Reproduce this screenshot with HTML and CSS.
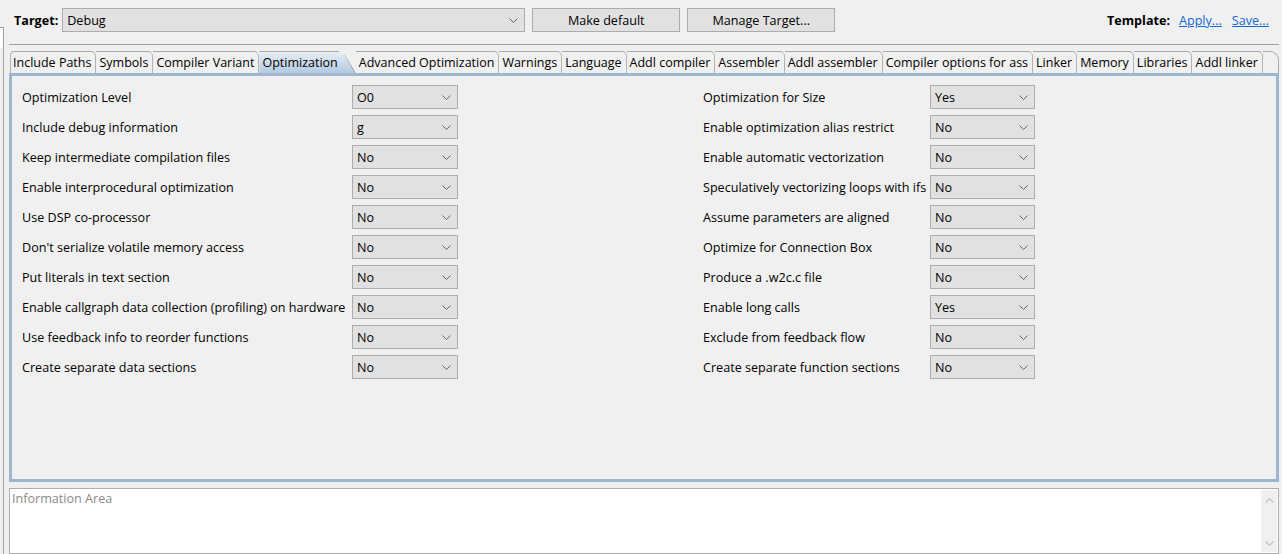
FILE: index.html
```html
<!DOCTYPE html>
<html>
<head>
<meta charset="utf-8">
<link rel="stylesheet" href="styles.css">
</head>
<body>
<div class="app">
  <div class="edge"><div class="edge-box"></div><div class="edge-line"></div></div>
  <div class="main">
    <header class="toolbar">
      <span class="strong target-lbl">Target:</span>
      <div class="combo combo-target"><span>Debug</span><svg class="chev" width="9" height="5" viewBox="0 0 9 5"><path d="M0.5 0.5 L4.5 4.5 L8.5 0.5" fill="none" stroke="#666" stroke-width="1"/></svg></div>
      <button class="btn">Make default</button>
      <button class="btn">Manage Target...</button>
      <div class="spacer"></div>
      <span class="strong">Template:</span>
      <a class="link link-apply">Apply...</a>
      <a class="link link-save">Save...</a>
    </header>
    <div class="rule"></div>
    <nav class="tabs">
      <div class="tab first">Include Paths</div>
      <div class="tab">Symbols</div>
      <div class="tab">Compiler Variant</div>
      <div class="tab active">Optimization<svg class="slant" width="18" height="22" viewBox="0 0 18 22"><path d="M0 0.5 C4 0.5 5 1 7 4 L17.5 22" fill="none" stroke="#8c8c8c" stroke-width="1"/></svg></div>
      <div class="tab">Advanced Optimization</div>
      <div class="tab">Warnings</div>
      <div class="tab">Language</div>
      <div class="tab">Addl compiler</div>
      <div class="tab">Assembler</div>
      <div class="tab">Addl assembler</div>
      <div class="tab">Compiler options for ass</div>
      <div class="tab">Linker</div>
      <div class="tab">Memory</div>
      <div class="tab">Libraries</div>
      <div class="tab">Addl linker</div>
      <div class="tab-fill"></div>
    </nav>
    <section class="panel">
      <div class="form">
        <div class="lbl">Optimization Level</div>
        <div class="combo"><span>O0</span><svg class="chev" width="9" height="5" viewBox="0 0 9 5"><path d="M0.5 0.5 L4.5 4.5 L8.5 0.5" fill="none" stroke="#666"/></svg></div>
        <div class="lbl lbl-r">Optimization for Size</div>
        <div class="combo"><span>Yes</span><svg class="chev" width="9" height="5" viewBox="0 0 9 5"><path d="M0.5 0.5 L4.5 4.5 L8.5 0.5" fill="none" stroke="#666"/></svg></div>

        <div class="lbl">Include debug information</div>
        <div class="combo"><span>g</span><svg class="chev" width="9" height="5" viewBox="0 0 9 5"><path d="M0.5 0.5 L4.5 4.5 L8.5 0.5" fill="none" stroke="#666"/></svg></div>
        <div class="lbl lbl-r">Enable optimization alias restrict</div>
        <div class="combo"><span>No</span><svg class="chev" width="9" height="5" viewBox="0 0 9 5"><path d="M0.5 0.5 L4.5 4.5 L8.5 0.5" fill="none" stroke="#666"/></svg></div>

        <div class="lbl">Keep intermediate compilation files</div>
        <div class="combo"><span>No</span><svg class="chev" width="9" height="5" viewBox="0 0 9 5"><path d="M0.5 0.5 L4.5 4.5 L8.5 0.5" fill="none" stroke="#666"/></svg></div>
        <div class="lbl lbl-r">Enable automatic vectorization</div>
        <div class="combo"><span>No</span><svg class="chev" width="9" height="5" viewBox="0 0 9 5"><path d="M0.5 0.5 L4.5 4.5 L8.5 0.5" fill="none" stroke="#666"/></svg></div>

        <div class="lbl">Enable interprocedural optimization</div>
        <div class="combo"><span>No</span><svg class="chev" width="9" height="5" viewBox="0 0 9 5"><path d="M0.5 0.5 L4.5 4.5 L8.5 0.5" fill="none" stroke="#666"/></svg></div>
        <div class="lbl lbl-r">Speculatively vectorizing loops with ifs</div>
        <div class="combo"><span>No</span><svg class="chev" width="9" height="5" viewBox="0 0 9 5"><path d="M0.5 0.5 L4.5 4.5 L8.5 0.5" fill="none" stroke="#666"/></svg></div>

        <div class="lbl">Use DSP co-processor</div>
        <div class="combo"><span>No</span><svg class="chev" width="9" height="5" viewBox="0 0 9 5"><path d="M0.5 0.5 L4.5 4.5 L8.5 0.5" fill="none" stroke="#666"/></svg></div>
        <div class="lbl lbl-r">Assume parameters are aligned</div>
        <div class="combo"><span>No</span><svg class="chev" width="9" height="5" viewBox="0 0 9 5"><path d="M0.5 0.5 L4.5 4.5 L8.5 0.5" fill="none" stroke="#666"/></svg></div>

        <div class="lbl">Don't serialize volatile memory access</div>
        <div class="combo"><span>No</span><svg class="chev" width="9" height="5" viewBox="0 0 9 5"><path d="M0.5 0.5 L4.5 4.5 L8.5 0.5" fill="none" stroke="#666"/></svg></div>
        <div class="lbl lbl-r">Optimize for Connection Box</div>
        <div class="combo"><span>No</span><svg class="chev" width="9" height="5" viewBox="0 0 9 5"><path d="M0.5 0.5 L4.5 4.5 L8.5 0.5" fill="none" stroke="#666"/></svg></div>

        <div class="lbl">Put literals in text section</div>
        <div class="combo"><span>No</span><svg class="chev" width="9" height="5" viewBox="0 0 9 5"><path d="M0.5 0.5 L4.5 4.5 L8.5 0.5" fill="none" stroke="#666"/></svg></div>
        <div class="lbl lbl-r">Produce a .w2c.c file</div>
        <div class="combo"><span>No</span><svg class="chev" width="9" height="5" viewBox="0 0 9 5"><path d="M0.5 0.5 L4.5 4.5 L8.5 0.5" fill="none" stroke="#666"/></svg></div>

        <div class="lbl">Enable callgraph data collection (profiling) on hardware</div>
        <div class="combo"><span>No</span><svg class="chev" width="9" height="5" viewBox="0 0 9 5"><path d="M0.5 0.5 L4.5 4.5 L8.5 0.5" fill="none" stroke="#666"/></svg></div>
        <div class="lbl lbl-r">Enable long calls</div>
        <div class="combo"><span>Yes</span><svg class="chev" width="9" height="5" viewBox="0 0 9 5"><path d="M0.5 0.5 L4.5 4.5 L8.5 0.5" fill="none" stroke="#666"/></svg></div>

        <div class="lbl">Use feedback info to reorder functions</div>
        <div class="combo"><span>No</span><svg class="chev" width="9" height="5" viewBox="0 0 9 5"><path d="M0.5 0.5 L4.5 4.5 L8.5 0.5" fill="none" stroke="#666"/></svg></div>
        <div class="lbl lbl-r">Exclude from feedback flow</div>
        <div class="combo"><span>No</span><svg class="chev" width="9" height="5" viewBox="0 0 9 5"><path d="M0.5 0.5 L4.5 4.5 L8.5 0.5" fill="none" stroke="#666"/></svg></div>

        <div class="lbl">Create separate data sections</div>
        <div class="combo"><span>No</span><svg class="chev" width="9" height="5" viewBox="0 0 9 5"><path d="M0.5 0.5 L4.5 4.5 L8.5 0.5" fill="none" stroke="#666"/></svg></div>
        <div class="lbl lbl-r">Create separate function sections</div>
        <div class="combo"><span>No</span><svg class="chev" width="9" height="5" viewBox="0 0 9 5"><path d="M0.5 0.5 L4.5 4.5 L8.5 0.5" fill="none" stroke="#666"/></svg></div>
      </div>
    </section>
    <section class="info">
      <div class="info-text">Information Area</div>
      <div class="scroll">
        <svg width="9" height="5" viewBox="0 0 9 5"><path d="M0.5 4.5 L4.5 0.5 L8.5 4.5" fill="none" stroke="#c2c2c2" stroke-width="1.2"/></svg>
        <svg width="9" height="5" viewBox="0 0 9 5"><path d="M0.5 0.5 L4.5 4.5 L8.5 0.5" fill="none" stroke="#c2c2c2" stroke-width="1.2"/></svg>
      </div>
    </section>
  </div>
</div>
</body>
</html>
```
FILE: styles.css
```css
html, body {
  margin: 0;
  padding: 0;
  height: 554px;
  overflow: hidden;
  background: #f0f0f0;
}
body {
  font-family: "Open Sans", "Liberation Sans", sans-serif;
  font-size: 12.6px;
  color: #000;
}
.app {
  display: flex;
  height: 554px;
}
.edge {
  width: 4px;
  flex: none;
  display: flex;
  flex-direction: column;
  padding-top: 27px;
  box-sizing: border-box;
}
.edge-box {
  height: 21px;
  background: #fff;
  border-top: 1px solid #a0a0a0;
  border-right: 1px solid #a0a0a0;
  box-sizing: border-box;
}
.edge-line {
  flex: 1;
  border-right: 1px solid #a0a0a0;
}
.main {
  flex: 1;
  min-width: 0;
  display: flex;
  flex-direction: column;
  padding: 0 3px 0 5px;
}
.toolbar {
  height: 44px;
  box-sizing: border-box;
  padding: 8px 10px 0 0;
  display: flex;
  align-items: flex-start;
}
.strong {
  font-weight: bold;
  line-height: 25px;
}
.target-lbl {
  margin-left: 5px;
  margin-right: 4px;
}
.combo {
  height: 24px;
  box-sizing: border-box;
  border: 1px solid #adadad;
  background: #e1e1e1;
  display: flex;
  align-items: center;
  justify-content: space-between;
  padding: 1px 4px 0 4px;
  line-height: 22px;
}
.combo .chev {
  margin-right: 2px;
  flex: none;
}
.combo-target {
  width: 463px;
}
.btn {
  width: 148px;
  height: 24px;
  margin-left: 7px;
  box-sizing: border-box;
  border: 1px solid #adadad;
  background: #e1e1e1;
  font: inherit;
  color: #000;
  padding: 1px 0 0;
}
.spacer {
  flex: 1;
}
.link {
  color: #1468d6;
  text-decoration: underline;
  line-height: 25px;
}
.link-apply {
  margin-left: 9px;
}
.link-save {
  margin-left: 10px;
}
.rule {
  height: 1px;
  background: #a0a0a0;
}
.tabs {
  margin: 6px 0 0 1px;
  height: 22px;
  display: flex;
}
.tab {
  height: 22px;
  box-sizing: border-box;
  line-height: 22px;
  padding: 0 4px 0 3px;
  border-top: 1px solid #a8a8a8;
  border-right: 1px solid #b4b4b4;
  border-top-right-radius: 5px;
  white-space: nowrap;
  font-size: 12.5px;
}
.tab.first {
  border-left: 1px solid #b4b4b4;
  border-top-left-radius: 4px;
  padding-left: 2px;
}
.tab.active {
  position: relative;
  border-right: none;
  border-radius: 0;
  padding-right: 18px;
  background: linear-gradient(to bottom, #e9eff6 0%, #c9d9ea 55%, #b4cae1 100%);
  clip-path: polygon(0 0, calc(100% - 18px) 0, calc(100% - 11px) 4px, 100% 100%, 0 100%);
}
.tab.active .slant {
  position: absolute;
  right: 0;
  top: -1px;
}
.tab-fill {
  flex: 1;
  height: 22px;
  box-sizing: border-box;
  border-top: 1px solid #a8a8a8;
  border-right: 1px solid #a8a8a8;
  border-top-right-radius: 9px;
}
.panel {
  height: 409px;
  box-sizing: border-box;
  border: 3px solid #9fb6cf;
  padding: 9px 10px 0 10px;
}
.form {
  display: grid;
  grid-template-columns: 330px 106px 245px 227px 105px;
  grid-auto-rows: 24px;
  row-gap: 6px;
  align-items: center;
}
.lbl {
  white-space: nowrap;
  grid-column: 1;
  padding-top: 1px;
}
.lbl-r {
  grid-column: 4;
}
.info {
  margin-top: 6px;
  flex: 1;
  box-sizing: border-box;
  border: 1px solid #abadb3;
  background: #fff;
  display: flex;
  justify-content: space-between;
  padding: 1px 1px 1px 2px;
}
.info-text {
  color: #8a8a8a;
  line-height: 18px;
}
.scroll {
  width: 16px;
  background: #f0f0f0;
  display: flex;
  flex-direction: column;
  justify-content: space-between;
  align-items: center;
  padding: 8px 0 6px;
}
```
